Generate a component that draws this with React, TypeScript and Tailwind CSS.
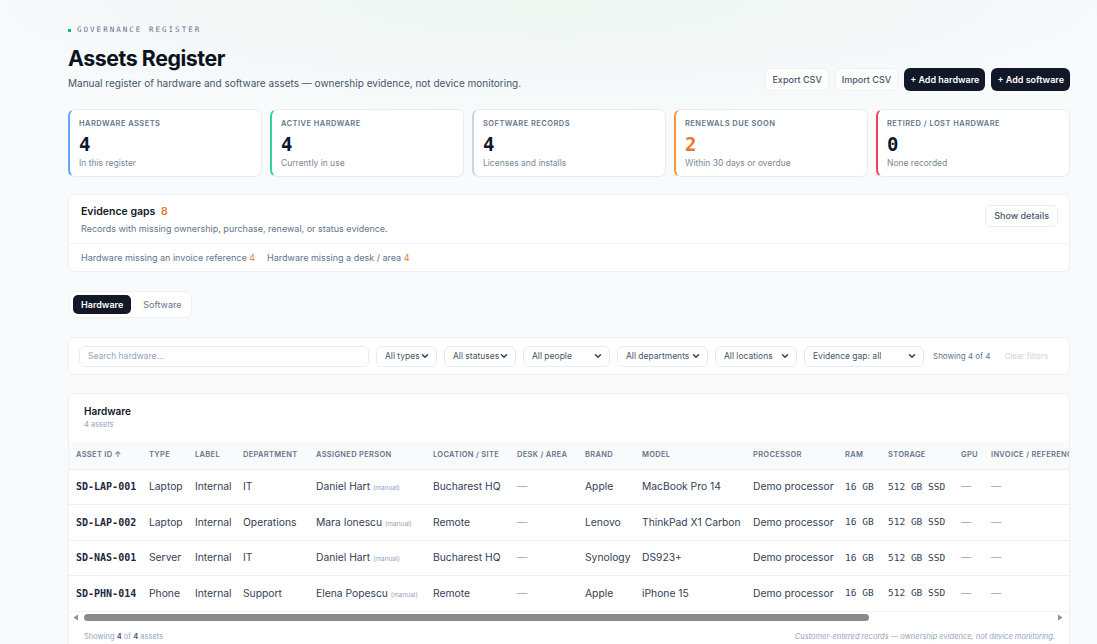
import React from "react";
import { ChevronDown } from "lucide-react";

const stats = [
  { label: "Hardware assets", value: "4", sub: "In this register", edge: "border-l-[#60a5fa]", tone: "text-[#0f172a]" },
  { label: "Active hardware", value: "4", sub: "Currently in use", edge: "border-l-[#34d399]", tone: "text-[#0f172a]" },
  { label: "Software records", value: "4", sub: "Licenses and installs", edge: "border-l-[#cbd5e1]", tone: "text-[#0f172a]" },
  { label: "Renewals due soon", value: "2", sub: "Within 30 days or overdue", edge: "border-l-[#fb923c]", tone: "text-[#ea7a2c]" },
  { label: "Retired / lost hardware", value: "0", sub: "None recorded", edge: "border-l-[#f43f5e]", tone: "text-[#0f172a]" },
];

const filters = [
  { label: "All types", w: "w-[61px]" },
  { label: "All statuses", w: "w-[72px]" },
  { label: "All people", w: "w-[87px]" },
  { label: "All departments", w: "w-[91px]" },
  { label: "All locations", w: "w-[82px]" },
  { label: "Evidence gap: all", w: "w-[120px]" },
];

const columns = [
  { label: "Asset ID ↑", w: "w-[73px]" },
  { label: "Type", w: "w-[46px]" },
  { label: "Label", w: "w-[48px]" },
  { label: "Department", w: "w-[73px]" },
  { label: "Assigned person", w: "w-[117px]" },
  { label: "Location / site", w: "w-[84px]" },
  { label: "Desk / area", w: "w-[68px]" },
  { label: "Brand", w: "w-[57px]" },
  { label: "Model", w: "w-[111px]" },
  { label: "Processor", w: "w-[92px]" },
  { label: "RAM", w: "w-[43px]" },
  { label: "Storage", w: "w-[73px]" },
  { label: "GPU", w: "w-[30px]" },
  { label: "Invoice / reference", w: "w-[120px]" },
  { label: "Status", w: "w-[78px]" },
  { label: "Actions", w: "w-[135px]" },
];

const rows = [
  { id: "SD-LAP-001", type: "Laptop", dept: "IT", person: "Daniel Hart", loc: "Bucharest HQ", brand: "Apple", model: "MacBook Pro 14" },
  { id: "SD-LAP-002", type: "Laptop", dept: "Operations", person: "Mara Ionescu", loc: "Remote", brand: "Lenovo", model: "ThinkPad X1 Carbon" },
  { id: "SD-NAS-001", type: "Server", dept: "IT", person: "Daniel Hart", loc: "Bucharest HQ", brand: "Synology", model: "DS923+" },
  { id: "SD-PHN-014", type: "Phone", dept: "Support", person: "Elena Popescu", loc: "Remote", brand: "Apple", model: "iPhone 15" },
];

const mono = "font-['DejaVu_Sans_Mono',monospace]";

export default function App() {
  return (
    <div className="min-h-screen bg-[#f8fafc] bg-[radial-gradient(ellipse_60%_120px_at_50%_0%,#eef6f2,transparent)] font-['Inter',sans-serif] text-[#0f172a]">
      <div className="pl-[68px] pr-[27px] pt-[25px]">
        {/* header */}
        <div className="flex items-end justify-between">
          <div>
            <div className={`flex items-center gap-[6px] h-[10px] text-[7.5px] tracking-[0.27em] text-[#64748b] ${mono}`}>
              <span className="w-[3px] h-[3px] bg-[#10b981]" />
              GOVERNANCE REGISTER
            </div>
            <h1 className="mt-[9px] text-[21.3px] leading-[28px] font-bold tracking-[-0.02em] text-[#0b1220]">Assets Register</h1>
            <p className="mt-[4px] text-[10px] leading-[14px] text-[#475569]">
              Manual register of hardware and software assets — ownership evidence, not device monitoring.
            </p>
          </div>
          <div className="flex gap-[6px] text-[9px] font-medium mb-[-1px]">
            <button className="h-[23px] px-[6px] rounded-[6px] border border-[#eef0f3] bg-white text-[#475569]">Export CSV</button>
            <button className="h-[23px] px-[6px] rounded-[6px] border border-[#eef0f3] bg-white text-[#475569]">Import CSV</button>
            <button className="h-[23px] px-[6px] rounded-[6px] bg-[#111827] text-white font-semibold">+ Add hardware</button>
            <button className="h-[23px] px-[6px] rounded-[6px] bg-[#111827] text-white font-semibold">+ Add software</button>
          </div>
        </div>

        {/* stats */}
        <div className="mt-[19px] grid grid-cols-5 gap-[8px]">
          {stats.map((s) => (
            <div key={s.label} className={`h-[68px] rounded-[7px] border border-[#e8ecf1] border-l-2 ${s.edge} bg-white pl-[9px] pt-[9px]`}>
              <div className="text-[7.5px] leading-[10px] font-semibold uppercase tracking-[0.06em] text-[#64748b]">{s.label}</div>
              <div className={`mt-[4px] text-[19px] leading-[22px] font-semibold ${mono} ${s.tone}`}>{s.value}</div>
              <div className="mt-[2px] text-[8.5px] leading-[12px] text-[#7b8794]">{s.sub}</div>
            </div>
          ))}
        </div>

        {/* evidence gaps */}
        <div className="mt-[17px] rounded-[7px] border border-[#eef0f3] bg-white">
          <div className="flex items-start justify-between pl-[12px] pr-[11px] pt-[10px] pb-[8px] border-b border-[#f1f3f6]">
            <div>
              <div className="text-[10.5px] leading-[14px] font-semibold text-[#111827]">
                Evidence gaps <span className="ml-[3px] text-[#ea7a2c] font-semibold">8</span>
              </div>
              <div className="mt-[3px] text-[9px] leading-[13px] text-[#64748b]">
                Records with missing ownership, purchase, renewal, or status evidence.
              </div>
            </div>
            <button className="h-[22px] px-[8px] rounded-[6px] border border-[#e8ecf1] bg-white text-[9px] font-medium text-[#475569]">Show details</button>
          </div>
          <div className="flex gap-[12px] pl-[12px] py-[7px] text-[9px] leading-[13px] text-[#64748b]">
            <span>Hardware missing an invoice reference <span className="text-[#ea7a2c]">4</span></span>
            <span>Hardware missing a desk / area <span className="text-[#ea7a2c]">4</span></span>
          </div>
        </div>

        {/* tabs */}
        <div className="mt-[19px] flex w-fit items-center gap-[12px] rounded-[7px] border border-[#eef0f3] bg-white p-[3px] pr-[10px] ml-px">
          <span className="h-[19px] px-[8px] flex items-center rounded-[5px] bg-[#111827] text-white text-[9px] font-semibold">Hardware</span>
          <span className="text-[9px] text-[#64748b]">Software</span>
        </div>

        {/* filters */}
        <div className="mt-[19px] h-[38px] flex items-center gap-[7px] rounded-[7px] border border-[#eef0f3] bg-white px-[10px]">
          <div className="w-[290px] h-[21px] rounded-[6px] border border-[#e8ecf1] flex items-center px-[8px] text-[8.5px] text-[#94a3b8]">
            Search hardware...
          </div>
          {filters.map((f) => (
            <div key={f.label} className={`${f.w} h-[21px] rounded-[6px] border border-[#e8ecf1] flex items-center justify-between pl-[8px] pr-[6px] text-[8.5px] text-[#475569]`}>
              <span className="whitespace-nowrap">{f.label}</span>
              <ChevronDown size={10} strokeWidth={3.5} className="text-[#334155] shrink-0" />
            </div>
          ))}
          <span className="ml-[2px] text-[8px] text-[#64748b] whitespace-nowrap">Showing 4 of 4</span>
          <span className="ml-[7px] text-[8px] text-[#cbd5e1] whitespace-nowrap">Clear filters</span>
        </div>

        {/* table */}
        <div className="mt-[18px] rounded-[8px] border border-[#eef0f3] bg-white overflow-hidden">
          <div className="pl-[15px] pt-[10px] pb-[11px]">
            <div className="text-[10px] leading-[14px] font-semibold text-[#111827]">Hardware</div>
            <div className="mt-[1px] text-[7.5px] leading-[11px] text-[#94a3b8]">4 assets</div>
          </div>
          <div className="overflow-hidden">
            <table className="table-fixed w-[1248px] border-collapse text-left">
              <thead>
                <tr className="h-[28px] bg-[#f8fafc] border-b border-[#eef0f3]">
                  {columns.map((c) => (
                    <th key={c.label} className={`${c.w} px-[7px] text-[7.5px] font-semibold uppercase tracking-[0.04em] text-[#64748b] whitespace-nowrap`}>
                      {c.label}
                    </th>
                  ))}
                </tr>
              </thead>
              <tbody className="text-[10.3px] text-[#334155]">
                {rows.map((r, i) => (
                  <tr key={r.id} className={`h-[35.5px] whitespace-nowrap ${i < rows.length - 1 ? "border-b border-[#eef0f3]" : ""}`}>
                    <td className={`px-[7px] text-[10px] font-bold text-[#1e293b] ${mono}`}>{r.id}</td>
                    <td className="px-[7px]">{r.type}</td>
                    <td className="px-[7px]">Internal</td>
                    <td className="px-[7px]">{r.dept}</td>
                    <td className="px-[7px]">
                      {r.person} <span className="text-[6.5px] text-[#94a3b8]">(manual)</span>
                    </td>
                    <td className="px-[7px]">{r.loc}</td>
                    <td className="px-[7px] text-[#94a3b8]">—</td>
                    <td className="px-[7px]">{r.brand}</td>
                    <td className="px-[7px]">{r.model}</td>
                    <td className="px-[7px]">Demo processor</td>
                    <td className={`px-[7px] text-[9.5px] ${mono}`}>16 GB</td>
                    <td className={`px-[7px] text-[9.5px] ${mono}`}>512 GB SSD</td>
                    <td className="px-[7px] text-[#94a3b8]">—</td>
                    <td className="px-[7px] text-[#94a3b8]">—</td>
                    <td className="px-[7px]">Active</td>
                    <td className="px-[7px] text-[#64748b]">Edit</td>
                  </tr>
                ))}
              </tbody>
            </table>
          </div>
          {/* horizontal scrollbar */}
          <div className="h-[12px] flex items-center px-[4px] bg-white border-t border-[#f1f3f6]">
            <svg width="6" height="7" viewBox="0 0 6 7" className="shrink-0">
              <path d="M5 0.5 L0.5 3.5 L5 6.5 Z" fill="#8f8f8f" />
            </svg>
            <div className="ml-[5px] w-[785px] h-[7px] rounded-full bg-[#8a8a8a]" />
            <div className="flex-1" />
            <svg width="6" height="7" viewBox="0 0 6 7" className="shrink-0 mr-[2px]">
              <path d="M1 0.5 L5.5 3.5 L1 6.5 Z" fill="#8f8f8f" />
            </svg>
          </div>
          <div className="flex items-center justify-between pl-[15px] pr-[14px] pt-[8px] pb-[10px] text-[7.5px] text-[#94a3b8]">
            <span>
              Showing <span className="font-semibold text-[#475569]">4</span> of <span className="font-semibold text-[#475569]">4</span> assets
            </span>
            <span className="italic">Customer-entered records — ownership evidence, not device monitoring.</span>
          </div>
        </div>
      </div>
    </div>
  );
}
